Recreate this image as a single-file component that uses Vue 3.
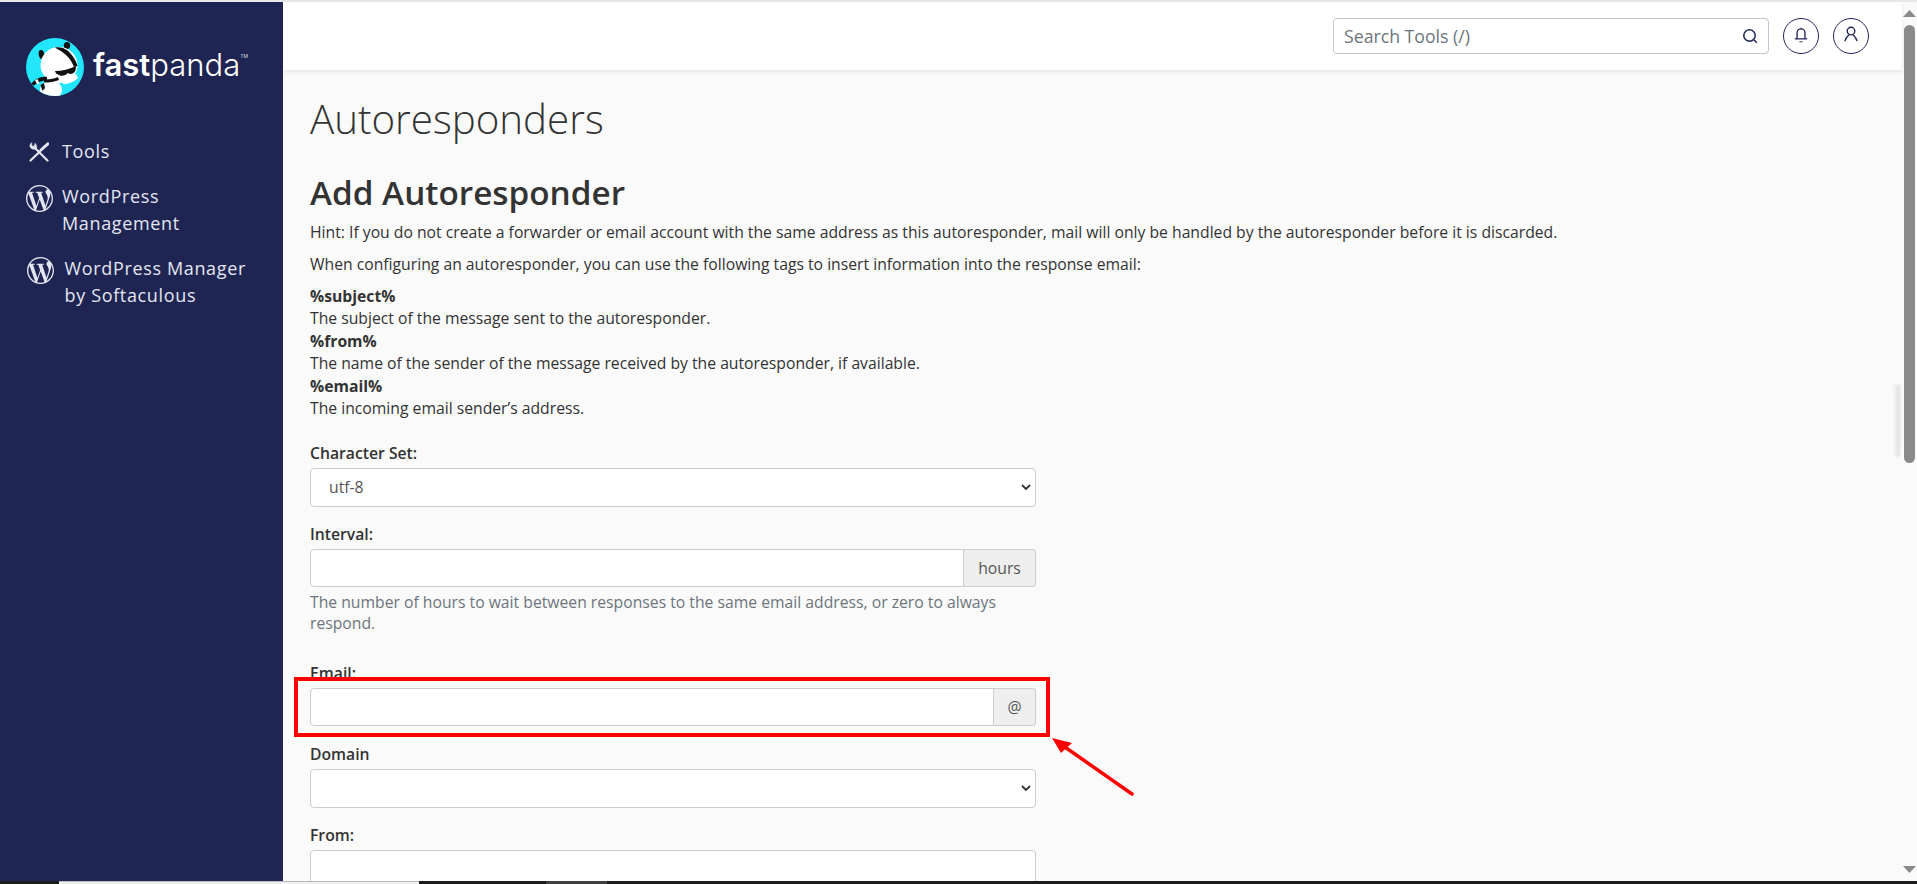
<script setup>
const wpPath = 'M21.469 6.825c.84 1.537 1.318 3.3 1.318 5.175 0 3.979-2.156 7.456-5.363 9.325l3.295-9.527c.615-1.54.82-2.771.82-3.864 0-.405-.026-.78-.07-1.11m-7.981.105c.647-.03 1.232-.105 1.232-.105.582-.075.514-.93-.067-.899 0 0-1.755.135-2.88.135-1.064 0-2.85-.15-2.85-.15-.585-.03-.661.855-.075.885 0 0 .54.061 1.125.09l1.68 4.605-2.37 7.08L5.354 6.9c.649-.03 1.234-.1 1.234-.1.585-.075.516-.93-.065-.896 0 0-1.746.138-2.874.138-.2 0-.438-.008-.69-.015C4.911 3.15 8.235 1.215 12 1.215c2.809 0 5.365 1.072 7.286 2.833-.046-.003-.091-.009-.141-.009-1.06 0-1.812.923-1.812 1.914 0 .89.513 1.643 1.06 2.531.411.72.89 1.643.89 2.977 0 .915-.354 1.994-.821 3.479l-1.075 3.585-3.9-11.61.001.014zM12 22.784c-1.059 0-2.081-.153-3.048-.437l3.237-9.406 3.315 9.087c.024.053.05.101.078.149-1.12.393-2.325.609-3.582.609M1.211 12c0-1.564.336-3.05.935-4.39L7.29 21.709C3.694 19.96 1.212 16.271 1.211 12M12 0C5.385 0 0 5.385 0 12s5.385 12 12 12 12-5.385 12-12S18.615 0 12 0'
const tags = [
  ['%subject%', 'The subject of the message sent to the autoresponder.'],
  ['%from%', 'The name of the sender of the message received by the autoresponder, if available.'],
  ['%email%', 'The incoming email sender’s address.'],
]
</script>

<template>
  <div class="page">
    <div class="topline"></div>
    <div class="shell">
      <aside class="side">
        <div class="logo">
          <svg class="panda" viewBox="0 0 58 58" width="58" height="58">
            <clipPath id="pc"><circle cx="29" cy="29" r="29" /></clipPath>
            <circle cx="29" cy="29" r="29" fill="#22e6fb" />
            <g clip-path="url(#pc)">
              <ellipse cx="15.500" cy="16.500" rx="2.800" ry="4.600" fill="#111" transform="rotate(-10 15.500 16.500)" />
              <ellipse cx="41" cy="7.500" rx="3.200" ry="3.600" fill="#111" />
              <ellipse cx="33" cy="27" rx="18.500" ry="18" fill="#fff" />
              <path d="M29 9.500 C33 8.500 38 9.500 41.500 12.500 C46 16.500 50 22 51.500 28 L48 29 C46 23.500 42 18 37.500 15 C35 13 32 11.500 29 9.500 Z" fill="#111" />
              <path d="M29 33 C36 33 44 31 50 28 L49.500 32.500 C48 36 44.500 37 42 35 C40 37 37 38.500 34 37.500 L30 35.500 Z" fill="#111" />
              <path d="M5 46 C9 41 15 38 21 39 L21 42 C16 42.500 11 44.500 8 47.500 Z" fill="#111" />
              <path d="M9 42.500 L11.500 46.500 L13.500 45.500 L11.500 41 Z" fill="#fff" />
              <path d="M37 40 C42 40 47 38 50 36 L52 40 C48 44 42 46 37 46 Z" fill="#fff" />
              <ellipse cx="25" cy="52" rx="11" ry="10" fill="#fff" />
              <path d="M18 42 C22 41 28 41 32 39 L33 42 C29 43.500 25 44.500 21 44.500 C20 44.500 19 44.500 18 44.500 Z" fill="#111" />
              <path d="M14.500 47 L18 45 L19 50 L16.500 53 Z" fill="#111" />
            </g>
          </svg>
          <div class="brand"><b>fast</b>panda<sup>TM</sup></div>
        </div>
        <nav class="nav">
          <a class="item tools">
            <svg class="ico-tools" viewBox="0 0 20 20" width="20" height="20" fill="none" stroke="#e3e6f0" stroke-linecap="round">
              <path d="M6.500 6.500 L18.500 18.500" stroke-width="2.200" />
              <path d="M2.500 0.800 C0.600 2 0.300 4.500 1.800 6 C3.300 7.500 5.500 7.800 7.500 6.500 C8 4.800 7.500 2.500 6 1.200 L5.300 4.300 L3 3.800 Z" fill="#e3e6f0" stroke="#e3e6f0" stroke-width="0.500" stroke-linejoin="round" />
              <path d="M1.500 18.500 L11 9.500" stroke-width="2.200" />
              <path d="M12 8 L18.800 1.800" stroke-width="3" />
            </svg>
            <span>Tools</span>
          </a>
          <a class="item wp">
            <svg class="ico-wp" viewBox="0 0 24 24" width="27" height="27"><path :d="wpPath" fill="#e3e6f0" /></svg>
            <span>WordPress<br />Management</span>
          </a>
          <a class="item wp second">
            <svg class="ico-wp" viewBox="0 0 24 24" width="27" height="27"><path :d="wpPath" fill="#e3e6f0" /></svg>
            <span>WordPress Manager<br />by Softaculous</span>
          </a>
        </nav>
      </aside>

      <div class="main">
        <header class="head">
          <div class="search">
            <span class="ph">Search Tools (/)</span>
            <svg viewBox="0 0 16 16" width="16" height="16" fill="none" stroke="#1f2553" stroke-width="1.500">
              <circle cx="7.500" cy="7.500" r="5.700" /><path d="M11.500 11.500 L14.800 14.800" />
            </svg>
          </div>
          <button class="round" aria-label="Notifications">
            <svg viewBox="0 0 16 16" width="18" height="18" fill="none" stroke="#1f2553" stroke-width="1.200">
              <path d="M4.500 11.500 V6 a3.500 3.500 0 0 1 7 0 V11.500 M2.500 11.500 H13.500 M8 2.500 V1.500" />
              <path d="M6.500 14 H9.500" stroke="#6b6f8a" />
            </svg>
          </button>
          <button class="round" aria-label="Account">
            <svg viewBox="0 0 16 16" width="18" height="18" fill="none" stroke="#1f2553" stroke-width="1.200">
              <circle cx="8" cy="4.500" r="3.400" /><path d="M6 8 C4.500 9.500 3 11.500 2.500 13.500 M10 8 C11.500 9.500 13 11.500 13.500 13.500" />
            </svg>
          </button>
        </header>

        <main class="content">
          <h1>Autoresponders</h1>
          <h2>Add Autoresponder</h2>
          <p class="hint">Hint: If you do not create a forwarder or email account with the same address as this autoresponder, mail will only be handled by the autoresponder before it is discarded.</p>
          <p class="hint">When configuring an autoresponder, you can use the following tags to insert information into the response email:</p>
          <dl class="tags">
            <template v-for="t in tags" :key="t[0]">
              <dt>{{ t[0] }}</dt>
              <dd>{{ t[1] }}</dd>
            </template>
          </dl>

          <form class="form">
            <div class="field">
              <label>Character Set:</label>
              <div class="select"><span>utf-8</span><svg class="chev" viewBox="0 0 10 6" width="10" height="6"><path d="M1 1 L5 5 L9 1" fill="none" stroke="#333" stroke-width="1.800" /></svg></div>
            </div>
            <div class="field">
              <label>Interval:</label>
              <div class="group"><div class="input"></div><div class="addon">hours</div></div>
              <p class="help">The number of hours to wait between responses to the same email address, or zero to always respond.</p>
            </div>
            <div class="field email">
              <label>Email:</label>
              <div class="group"><div class="input"></div><div class="addon at">@</div></div>
              <div class="redbox"></div>
              <svg class="arrow" viewBox="0 0 90 64" width="90" height="64">
                <path d="M82 58 L12 9" fill="none" stroke="#f00" stroke-width="3.500" stroke-linecap="round" />
                <path d="M2 2 L22 7 L11 17 Z" fill="#f00" />
              </svg>
            </div>
            <div class="field">
              <label>Domain</label>
              <div class="select"><svg class="chev" viewBox="0 0 10 6" width="10" height="6"><path d="M1 1 L5 5 L9 1" fill="none" stroke="#333" stroke-width="1.800" /></svg></div>
            </div>
            <div class="field">
              <label>From:</label>
              <div class="input tall"></div>
            </div>
          </form>
        </main>
        <div class="edge"></div>
      </div>

      <div class="scrollbar">
        <svg class="sb-arrow" viewBox="0 0 13 7" width="13" height="7"><path d="M0 7 L6.500 0 L13 7 Z" fill="#8a8a8a" /></svg>
        <div class="thumb"></div>
        <svg class="sb-arrow down" viewBox="0 0 13 7" width="13" height="7"><path d="M0 0 L6.500 7 L13 0 Z" fill="#8a8a8a" /></svg>
      </div>
    </div>
    <div class="taskbar">
      <div class="tb-dark first"></div>
      <div class="tb-light"></div>
      <div class="tb-dark second"></div>
      <div class="tb-gray"></div>
    </div>
  </div>
</template>

<style>
html, body { margin: 0; height: 100%; overflow: hidden; background: #fafafa; }
</style>

<style scoped>
* { box-sizing: border-box; }
.page { width: 1917px; height: 884px; display: flex; flex-direction: column; overflow: hidden; font-family: "Open Sans", sans-serif; color: #333; }
.topline { height: 2px; background: #e9e9e9; flex: none; }
.shell { flex: 1; min-height: 0; display: flex; }
.side { width: 283px; flex: none; background: #1f2553; padding: 36px 0 0 26px; color: #e3e6f0; }
.logo { display: flex; align-items: center; gap: 9px; }
.panda { flex: none; }
.brand { font-family: Inter, sans-serif; font-size: 31px; color: #fff; font-weight: 300; line-height: 1; margin-top: -5px; white-space: nowrap; }
.brand b { font-weight: 600; }
.brand sup { font-size: 5px; vertical-align: 18px; margin-left: 0; line-height: 0; }
.nav { margin-top: 42px; font-size: 18px; line-height: 27px; letter-spacing: 0.65px; }
.item { display: flex; align-items: flex-start; }
.tools { margin-left: 3px; align-items: center; gap: 13px; margin-bottom: 18px; }
.ico-wp { flex: none; margin: 1.500px 9px 0 0; }
.second { margin: 18px 0 0 1px; }
.second .ico-wp { margin: 1.500px 10.500px 0 0; }
.main { flex: 1; min-width: 0; display: flex; flex-direction: column; position: relative; }
.head { height: 68px; flex: none; background: #fff; box-shadow: 0 2px 5px rgba(0,0,0,.08); display: flex; align-items: center; justify-content: flex-end; padding-right: 33px; gap: 14px; position: relative; }
.search { width: 436px; height: 36px; border: 1px solid #c4c4d2; border-radius: 4px; display: flex; align-items: center; justify-content: space-between; padding: 0 10px 0 10px; }
.ph { font-size: 17.700px; color: #6c757d; }
.round { width: 36px; height: 36px; border: 1px solid #1f2553; border-radius: 50%; background: #fff; padding: 0 0 3px; display: flex; align-items: center; justify-content: center; }
.content { flex: 1; min-height: 0; padding: 25px 0 0 27px; overflow: hidden; }
h1 { margin: 0; font-size: 40.300px; font-weight: 300; line-height: 48px; color: #333; }
h2 { margin: 27px 0 6px; font-size: 33.300px; font-weight: 600; line-height: 44px; color: #333; }
.hint { margin: 0 0 8px; font-size: 15.720px; line-height: 24px; }
.tags { margin: 9px 0 0; font-size: 15.720px; line-height: 22.400px; }
.tags dt { font-weight: 700; }
.tags dd { margin: 0; }
.form { width: 726px; margin-top: 22px; }
.field { margin-bottom: 15px; position: relative; }
.field.email { margin-bottom: 16px; }
label { display: block; font-size: 15.720px; font-weight: 600; line-height: 24px; margin-bottom: 3px; }
.select { height: 38.500px; background: #fff; border: 1px solid #ccc; border-radius: 4px; padding: 0 18px; font-size: 15.720px; line-height: 36px; position: relative; color: #555; }
.chev { position: absolute; right: 4px; top: 15px; }
.group { display: flex; height: 38.500px; }
.input { flex: 1; background: #fff; border: 1px solid #ccc; border-radius: 4px 0 0 4px; }
.input.tall { border-radius: 4px; height: 60px; }
.addon { width: 72px; background: #eee; border: 1px solid #ccc; border-left: 0; border-radius: 0 4px 4px 0; font-size: 15.720px; text-align: center; line-height: 36px; color: #555; }
.addon.at { width: 42px; }
.help { margin: 5px 0 0; padding-bottom: 11.500px; font-size: 15.720px; line-height: 21px; color: #6c757d; }
.redbox { position: absolute; left: -16px; top: 16px; width: 756px; height: 60px; border: 4px solid #f00; }
.arrow { position: absolute; left: 740px; top: 75px; }
.edge { position: absolute; right: 2px; top: 383px; width: 7px; height: 72px; background: linear-gradient(to right, rgba(0,0,0,0), rgba(0,0,0,.13)); filter: blur(1.500px); }
.scrollbar { width: 15px; flex: none; background: #fafafa; display: flex; flex-direction: column; padding: 8px 0 8px 2px; }
.sb-arrow { display: block; margin-left: -1px; flex: none; }
.sb-arrow.down { margin-top: auto; }
.thumb { width: 11px; height: 438px; margin-top: 8px; background: #8a8a8a; border-radius: 5.500px; flex: none; }
.taskbar { height: 3px; flex: none; background: #1c1c1c; display: flex; }
.tb-dark.first { width: 59px; }
.tb-light { width: 360px; background: #eee; border-top: 1px solid #bbb; }
.tb-dark.second { width: 126px; }
.tb-gray { width: 61px; background: #404040; }
</style>
